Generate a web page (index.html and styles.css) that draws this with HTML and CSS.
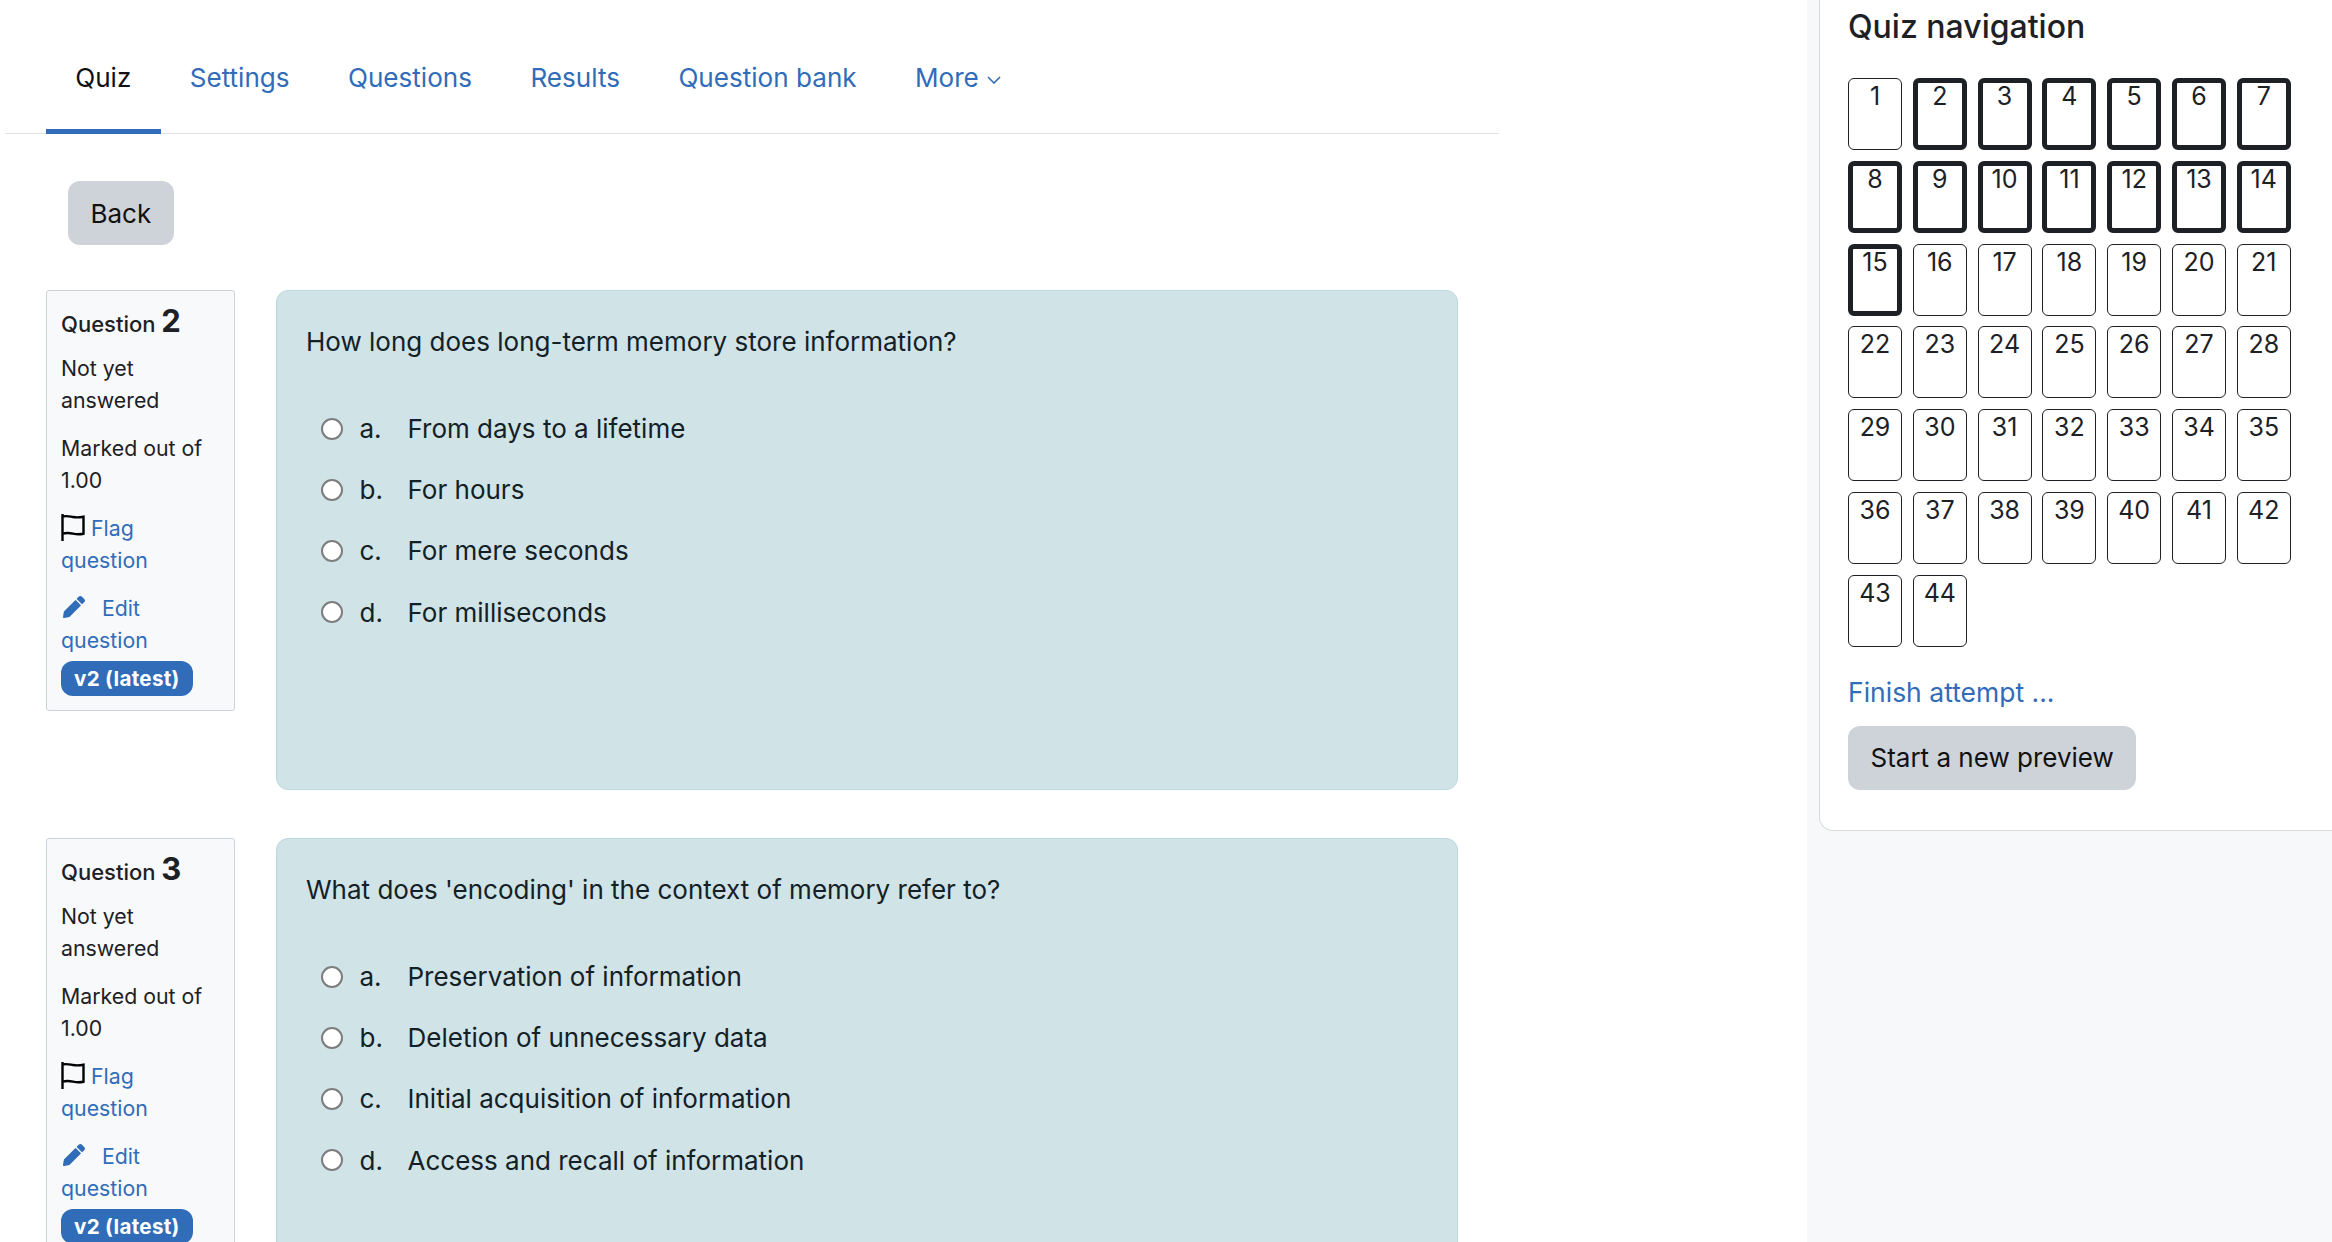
FILE: index.html
```html
<!DOCTYPE html>
<html lang="en">
<head>
  <meta charset="UTF-8" />
  <title>Quiz preview</title>
  <link rel="stylesheet" href="styles.css">
</head>
<body>
  <div class="page">
    <main class="main">
      <nav class="tabs">
        <a class="tab active" href="#">Quiz</a>
        <a class="tab" href="#">Settings</a>
        <a class="tab" href="#">Questions</a>
        <a class="tab" href="#">Results</a>
        <a class="tab" href="#">Question bank</a>
        <a class="tab" href="#">More
          <svg class="caret" viewBox="0 0 14 8" width="14" height="8"><path d="M1 1l6 6 6-6" fill="none" stroke="currentColor" stroke-width="1.6"/></svg>
        </a>
      </nav>
      <div class="back-row"><button class="btn">Back</button></div>

      <section class="question">
        <aside class="info">
          <h3 class="qno">Question <span>2</span></h3>
          <p>Not yet answered</p>
          <p>Marked out of 1.00</p>
          <p class="link-line">
            <svg class="flag" viewBox="0 0 24 27" width="24" height="27"><path d="M1.500 0v27M1.500 2.500c4-1 6-.3 10.500.5s6 .6 10.500-.3v17c-4.500.9-6.500.7-10.500-.1s-6.500-1-10.500 0" fill="none" stroke="#000" stroke-width="2.400"/></svg>
            <a href="#">Flag question</a>
          </p>
          <p class="link-line">
            <svg class="pencil" viewBox="0 0 512 512" width="22" height="22"><path fill="#316cb9" d="M497.900 142.100l-46.100 46.100c-4.700 4.700-12.300 4.700-17 0l-111-111c-4.700-4.700-4.700-12.300 0-17l46.100-46.100c18.700-18.700 49.100-18.700 67.900 0l60.100 60.100c18.800 18.700 18.800 49.100 0 67.900zM284.200 99.800L21.600 362.400.4 483.900c-2.900 16.400 11.400 30.600 27.800 27.800l121.500-21.300 262.600-262.600c4.700-4.700 4.700-12.300 0-17l-111-111c-4.800-4.700-12.400-4.700-17.100 0z"/></svg>
            <a class="edit" href="#">Edit question</a>
          </p>
          <span class="badge">v2 (latest)</span>
        </aside>
        <div class="content">
          <p class="qtext">How long does long-term memory store information?</p>
          <div class="answers">
            <label class="answer"><input type="radio" name="q2"><span class="letter">a.</span><span>From days to a lifetime</span></label>
            <label class="answer"><input type="radio" name="q2"><span class="letter">b.</span><span>For hours</span></label>
            <label class="answer"><input type="radio" name="q2"><span class="letter">c.</span><span>For mere seconds</span></label>
            <label class="answer"><input type="radio" name="q2"><span class="letter">d.</span><span>For milliseconds</span></label>
          </div>
        </div>
      </section>

      <section class="question">
        <aside class="info">
          <h3 class="qno">Question <span>3</span></h3>
          <p>Not yet answered</p>
          <p>Marked out of 1.00</p>
          <p class="link-line">
            <svg class="flag" viewBox="0 0 24 27" width="24" height="27"><path d="M1.500 0v27M1.500 2.500c4-1 6-.3 10.500.5s6 .6 10.500-.3v17c-4.500.9-6.500.7-10.500-.1s-6.500-1-10.500 0" fill="none" stroke="#000" stroke-width="2.400"/></svg>
            <a href="#">Flag question</a>
          </p>
          <p class="link-line">
            <svg class="pencil" viewBox="0 0 512 512" width="22" height="22"><path fill="#316cb9" d="M497.900 142.100l-46.100 46.100c-4.700 4.700-12.300 4.700-17 0l-111-111c-4.700-4.700-4.700-12.300 0-17l46.100-46.100c18.700-18.700 49.100-18.700 67.900 0l60.100 60.100c18.800 18.700 18.800 49.100 0 67.900zM284.200 99.800L21.600 362.400.4 483.900c-2.900 16.400 11.400 30.600 27.800 27.800l121.500-21.300 262.600-262.600c4.700-4.700 4.700-12.300 0-17l-111-111c-4.800-4.700-12.400-4.700-17.100 0z"/></svg>
            <a class="edit" href="#">Edit question</a>
          </p>
          <span class="badge">v2 (latest)</span>
        </aside>
        <div class="content">
          <p class="qtext">What does 'encoding' in the context of memory refer to?</p>
          <div class="answers">
            <label class="answer"><input type="radio" name="q3"><span class="letter">a.</span><span>Preservation of information</span></label>
            <label class="answer"><input type="radio" name="q3"><span class="letter">b.</span><span>Deletion of unnecessary data</span></label>
            <label class="answer"><input type="radio" name="q3"><span class="letter">c.</span><span>Initial acquisition of information</span></label>
            <label class="answer"><input type="radio" name="q3"><span class="letter">d.</span><span>Access and recall of information</span></label>
          </div>
        </div>
      </section>
    </main>

    <aside class="sidebar">
      <div class="panel">
        <h2 class="panel-title">Quiz navigation</h2>
        <div class="qn-grid">
          <a class="qn" href="#">1</a>
          <a class="qn seen" href="#">2</a>
          <a class="qn seen" href="#">3</a>
          <a class="qn seen" href="#">4</a>
          <a class="qn seen" href="#">5</a>
          <a class="qn seen" href="#">6</a>
          <a class="qn seen" href="#">7</a>
          <a class="qn seen" href="#">8</a>
          <a class="qn seen" href="#">9</a>
          <a class="qn seen" href="#">10</a>
          <a class="qn seen" href="#">11</a>
          <a class="qn seen" href="#">12</a>
          <a class="qn seen" href="#">13</a>
          <a class="qn seen" href="#">14</a>
          <a class="qn seen" href="#">15</a>
          <a class="qn" href="#">16</a>
          <a class="qn" href="#">17</a>
          <a class="qn" href="#">18</a>
          <a class="qn" href="#">19</a>
          <a class="qn" href="#">20</a>
          <a class="qn" href="#">21</a>
          <a class="qn" href="#">22</a>
          <a class="qn" href="#">23</a>
          <a class="qn" href="#">24</a>
          <a class="qn" href="#">25</a>
          <a class="qn" href="#">26</a>
          <a class="qn" href="#">27</a>
          <a class="qn" href="#">28</a>
          <a class="qn" href="#">29</a>
          <a class="qn" href="#">30</a>
          <a class="qn" href="#">31</a>
          <a class="qn" href="#">32</a>
          <a class="qn" href="#">33</a>
          <a class="qn" href="#">34</a>
          <a class="qn" href="#">35</a>
          <a class="qn" href="#">36</a>
          <a class="qn" href="#">37</a>
          <a class="qn" href="#">38</a>
          <a class="qn" href="#">39</a>
          <a class="qn" href="#">40</a>
          <a class="qn" href="#">41</a>
          <a class="qn" href="#">42</a>
          <a class="qn" href="#">43</a>
          <a class="qn" href="#">44</a>
        </div>
        <a class="finish" href="#">Finish attempt ...</a>
        <button class="btn">Start a new preview</button>
      </div>
    </aside>
  </div>
</body>
</html>
```

FILE: styles.css
```css
html, body {
  height: 100%;
}

body {
  margin: 0;
  overflow: hidden;
  background-color: #fff;
  color: #1d2125;
  font-family: Inter, "Noto Sans", sans-serif;
  font-size: 24px;
}

a {
  color: #316cb9;
  text-decoration: none;
}

.page {
  display: flex;
  height: 1242px;
}

.main {
  width: 1807px;
  flex-shrink: 0;
}

.sidebar {
  flex: 1;
  background-color: #f7f8fa;
  padding-left: 12px;
}

/* tabs */
.tabs {
  display: flex;
  width: 1494px;
  height: 134px;
  margin-left: 5px;
  padding-left: 41px;
  box-sizing: border-box;
  border-bottom: 1px solid #dee2e6;
}

.tab {
  display: block;
  height: 134px;
  padding: 60px 29.200px 0;
  box-sizing: border-box;
  font-size: 26.100px;
  line-height: 36px;
  white-space: nowrap;
}

.tab.active {
  color: #111;
  border-bottom: 5px solid #316cb9;
}

.caret {
  vertical-align: 3px;
  margin-left: 1px;
}

/* buttons */
.btn {
  height: 64px;
  padding: 0 22.500px;
  border: none;
  border-radius: 12px;
  background-color: #ced2d9;
  color: #111;
  font-family: inherit;
  font-size: 26px;
}

.back-row {
  padding: 47px 0 45px 68px;
}

/* questions */
.question {
  display: flex;
  align-items: flex-start;
  gap: 41px;
  margin: 0 0 48px 46px;
}

.info {
  width: 189px;
  box-sizing: border-box;
  padding: 10px 14px 14px;
  background-color: #f8f9fa;
  border: 1px solid #ccd2da;
  border-radius: 3px;
  font-size: 21.300px;
  line-height: 32px;
}

.info p {
  margin: 0 0 16px;
}

.qno {
  margin: 0 0 8px;
  font-size: 22px;
  font-weight: 500;
  line-height: 40px;
}

.qno span {
  font-size: 31px;
  font-weight: 700;
}

.link-line svg {
  vertical-align: -5px;
}

.link-line .pencil {
  vertical-align: -2px;
  margin-left: 2px;
  margin-right: 11px;
}

.info .link-line:last-of-type {
  margin-bottom: 5px;
}

.badge {
  display: inline-block;
  height: 35px;
  padding: 0 13px;
  border-radius: 12px;
  background-color: #316cb9;
  color: #fff;
  font-size: 20.600px;
  font-weight: 700;
  line-height: 35px;
  letter-spacing: .3px;
  white-space: nowrap;
}

.content {
  width: 1182px;
  height: 500px;
  box-sizing: border-box;
  padding: 31px 29px;
  background-color: #d0e3e7;
  border: 1px solid #bcd8df;
  border-radius: 12px;
  color: #132126;
  font-size: 26px;
  line-height: 39px;
}

.qtext {
  margin: 0 0 37px;
}

.answer {
  display: flex;
  align-items: center;
  height: 61.200px;
}

.answer input {
  appearance: none;
  box-sizing: border-box;
  width: 22px;
  height: 22px;
  margin: 0 0 0 15px;
  background-color: #fff;
  border: 2px solid #7d7d7d;
  border-radius: 50%;
  flex-shrink: 0;
}

.letter {
  width: 48px;
  margin-left: 16.500px;
}

/* quiz navigation */
.panel {
  height: 831px;
  box-sizing: border-box;
  padding: 0 0 0 28px;
  background-color: #fff;
  border-left: 1px solid #d6d8db;
  border-bottom: 1px solid #d6d8db;
  border-bottom-left-radius: 14px;
}

.panel-title {
  margin: 0;
  padding-top: 7px;
  font-size: 32px;
  font-weight: 500;
  line-height: 40px;
}

.qn-grid {
  display: flex;
  flex-wrap: wrap;
  gap: 10.800px 10.800px;
  width: 460px;
  margin-top: 31px;
}

.qn {
  display: block;
  width: 54px;
  height: 72px;
  box-sizing: border-box;
  padding-top: 2px;
  border: 1px solid #1d2125;
  border-radius: 6px;
  color: #1d2125;
  font-size: 25px;
  line-height: 30px;
  text-align: center;
}

.qn.seen {
  border-width: 5px;
  padding-top: 0;
  line-height: 26px;
}

.finish {
  display: block;
  margin: 25px 0 14px;
  font-size: 26.500px;
  line-height: 40px;
}
```
